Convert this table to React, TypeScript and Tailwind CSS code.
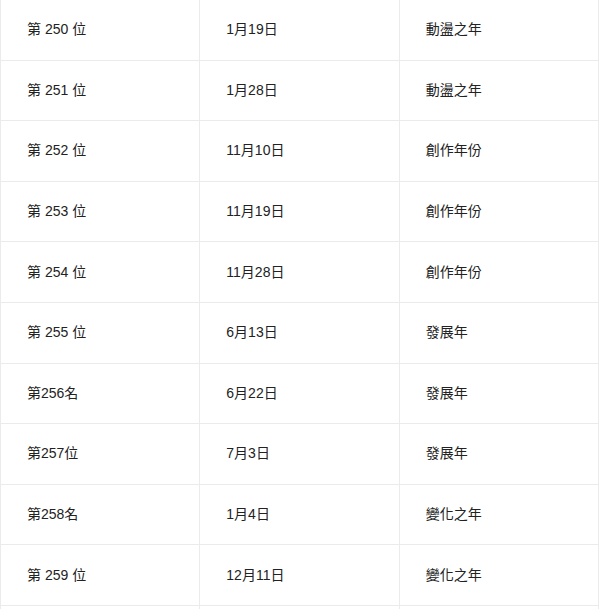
const rows: [string, string, string][] = [
  ['第 250 位', '1月19日', '動盪之年'],
  ['第 251 位', '1月28日', '動盪之年'],
  ['第 252 位', '11月10日', '創作年份'],
  ['第 253 位', '11月19日', '創作年份'],
  ['第 254 位', '11月28日', '創作年份'],
  ['第 255 位', '6月13日', '發展年'],
  ['第256名', '6月22日', '發展年'],
  ['第257位', '7月3日', '發展年'],
  ['第258名', '1月4日', '變化之年'],
  ['第 259 位', '12月11日', '變化之年'],
];

export default function App() {
  return (
    <div
      className="h-[609px] overflow-hidden bg-white text-[14px] text-[#222]"
      style={{ fontFamily: '"Liberation Sans", "Noto Sans CJK TC", sans-serif' }}
    >
      <table className="-mt-px w-[599px] table-fixed border-collapse">
        <tbody>
          {rows.map((r) => (
            <tr key={r[0]} className="h-[60.6px]">
              {r.map((c, i) => (
                <td key={i} className="border border-[#ebebeb] pl-[26px] pb-px align-middle leading-5">
                  {c}
                </td>
              ))}
            </tr>
          ))}
          {/* next row is only just peeking in at the bottom */}
          <tr className="h-[60.6px]">
            <td className="border border-[#ebebeb]" />
            <td className="border border-[#ebebeb]" />
            <td className="border border-[#ebebeb]" />
          </tr>
        </tbody>
      </table>
    </div>
  );
}
